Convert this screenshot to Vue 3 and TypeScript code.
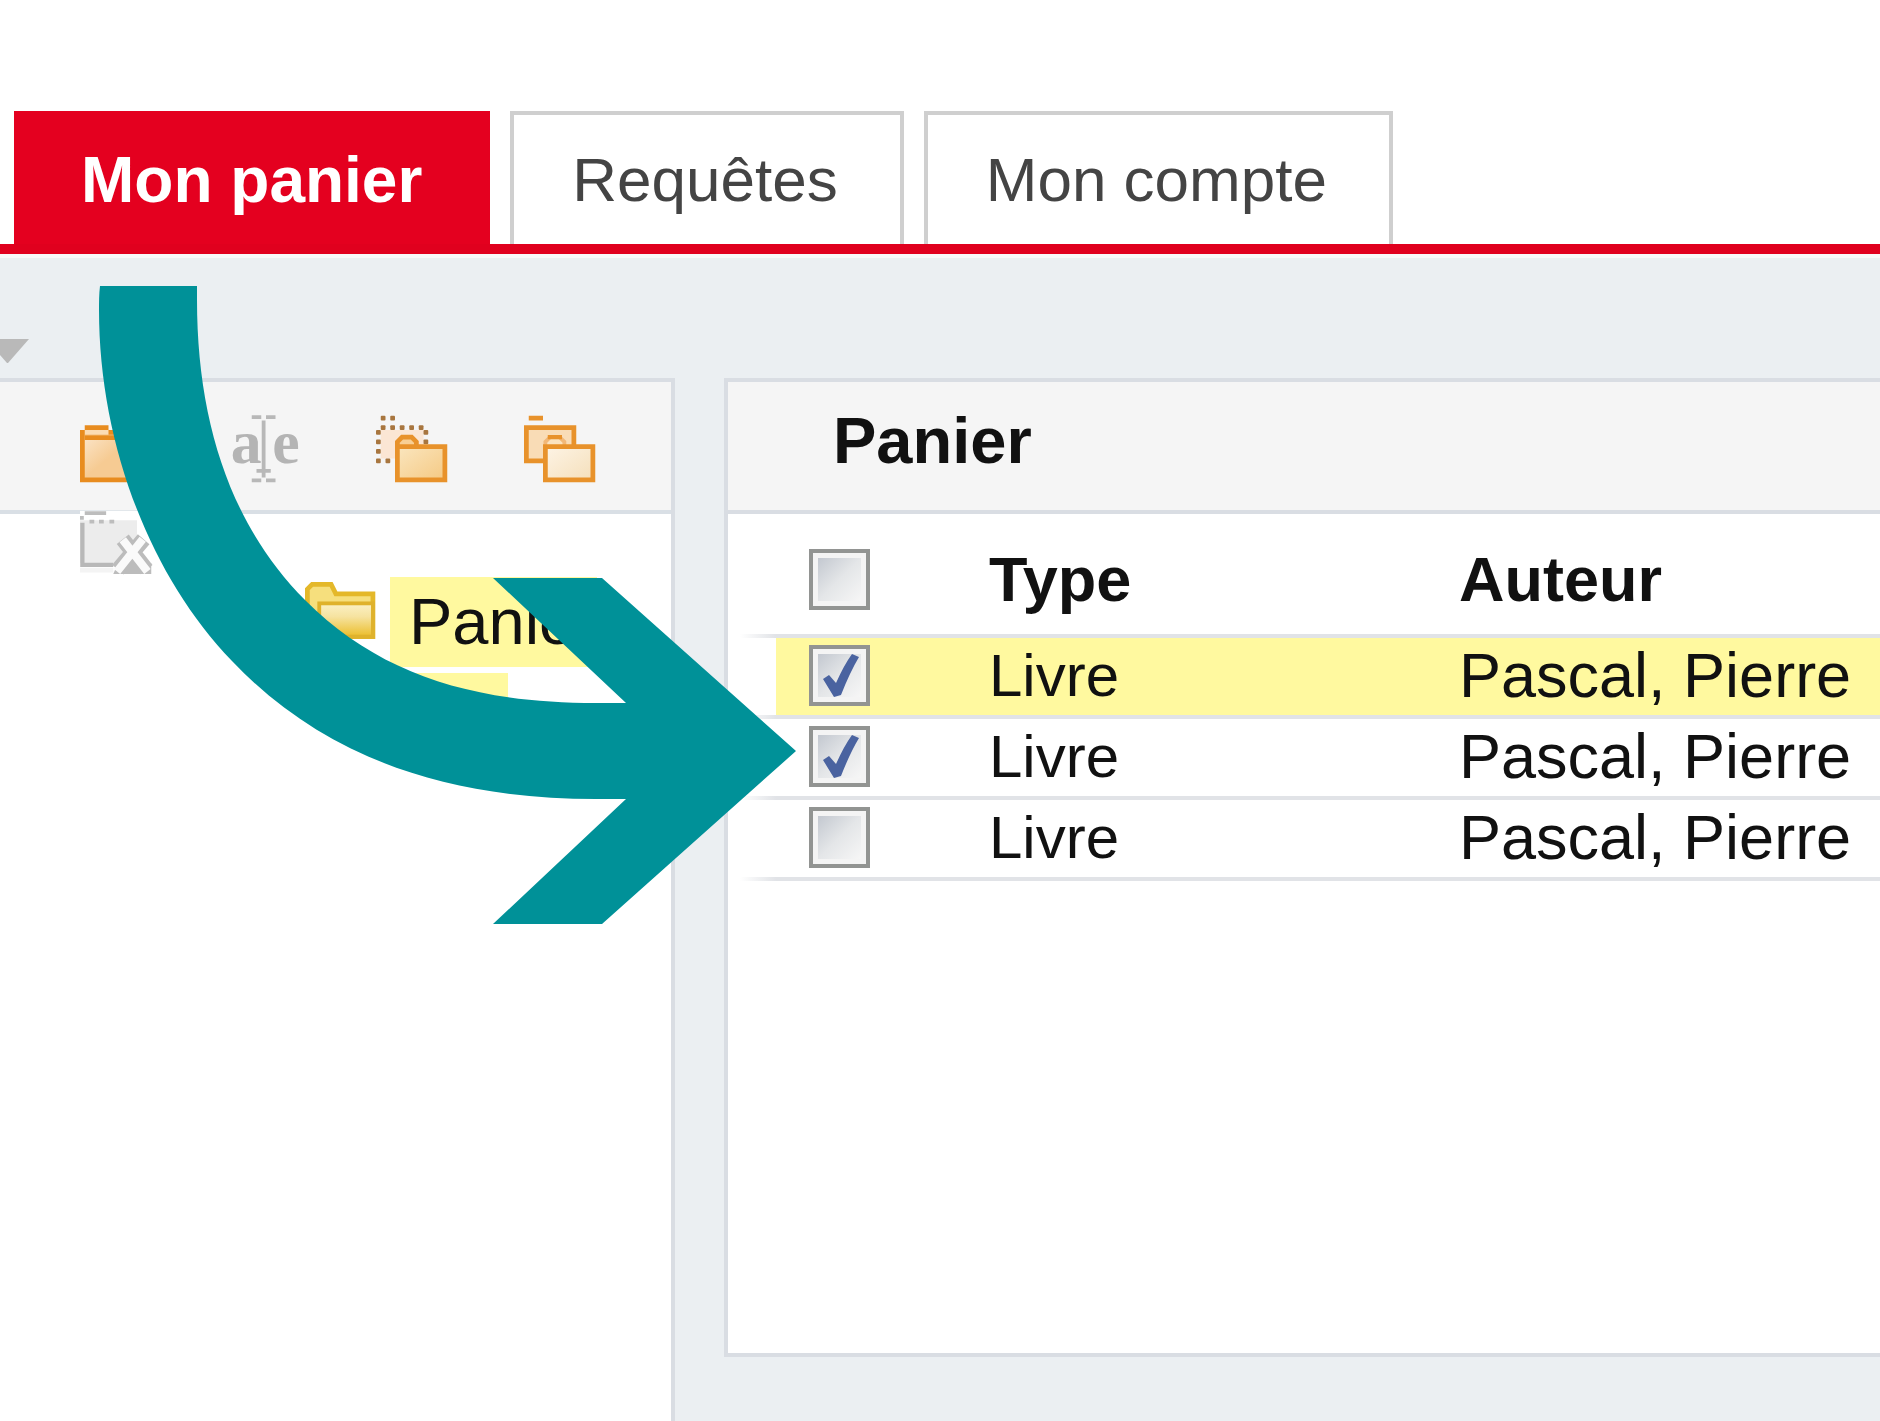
<script setup lang="ts">
import { ref } from 'vue'

interface Item {
  id: number
  type: string
  author: string
  checked: boolean
  highlighted: boolean
}

const tabs = ['Mon panier', 'Requêtes', 'Mon compte']
const activeTab = ref('Mon panier')
const allChecked = ref(false)

const items = ref<Item[]>([
  { id: 1, type: 'Livre', author: 'Pascal, Pierre', checked: true, highlighted: true },
  { id: 2, type: 'Livre', author: 'Pascal, Pierre', checked: true, highlighted: false },
  { id: 3, type: 'Livre', author: 'Pascal, Pierre', checked: false, highlighted: false },
])

// Cells of the dotted folder outline on the 16-unit icon grid
const dots: [number, number][] = [
  [1, 1], [3, 1], [1, 3], [3, 3], [5, 3], [7, 3], [9, 3],
  [0, 4], [0, 6], [0, 8], [0, 10], [2, 10], [10, 4], [10, 6],
]
</script>

<template>
  <div class="page">
    <nav class="tabs">
      <a
        v-for="tab in tabs"
        :key="tab"
        href="#"
        class="tab"
        :class="{ active: tab === activeTab }"
        @click.prevent="activeTab = tab"
      >{{ tab }}</a>
    </nav>

    <main class="workspace">
      <div class="topbar">
        <svg class="caret" viewBox="0 0 30 24" aria-hidden="true">
          <path d="M0 0H29L8 24H7L0 16Z" fill="#b9b9b9" />
        </svg>
      </div>

      <div class="columns">
        <section class="tree-panel">
          <div class="toolbar">
            <button type="button" class="tool" aria-label="Nouveau dossier">
              <svg viewBox="0 0 16 16">
                <defs>
                  <linearGradient id="folderFill" x1="0" y1="0" x2="1" y2="1">
                    <stop offset="0" stop-color="#fce8cf" />
                    <stop offset="0.5" stop-color="#f6cb93" />
                    <stop offset="1" stop-color="#f6cb93" />
                  </linearGradient>
                </defs>
                <rect x="0.5" y="4.5" width="12" height="10" fill="url(#folderFill)" stroke="#e88c1f" />
                <path d="M1 3.5H6M1 5.6H12" stroke="#e88c1f" />
                <path d="M1 4.5H6" stroke="#fbdcb4" />
              </svg>
            </button>
            <button type="button" class="tool" aria-label="Renommer">
              <svg viewBox="0 0 16 16">
                <g fill="#b4b4b4" font-family="'Liberation Serif', serif" font-weight="bold" font-size="13">
                  <text x="0.6" y="11">a</text>
                  <text x="9.3" y="11">e</text>
                </g>
                <path d="M7.5 2V14M5 1.3H7M8 1.3H10M5 14.6H7M8 14.6H10M6 12.6H9" stroke="#b8b8b8" stroke-width="0.8" />
              </svg>
            </button>
            <button type="button" class="tool" aria-label="Déplacer le dossier">
              <svg viewBox="0 0 16 16">
                <defs>
                  <linearGradient id="moveFill" x1="0" y1="0" x2="1" y2="1">
                    <stop offset="0" stop-color="#fae6bf" />
                    <stop offset="1" stop-color="#f5c983" />
                  </linearGradient>
                </defs>
                <path d="M1 4H10V8H4V10H1Z" fill="#fbe6d4" />
                <rect
                  v-for="([x, y], i) in dots"
                  :key="i"
                  :x="x"
                  :y="y"
                  width="1"
                  height="1"
                  rx="0.2"
                  fill="#a8763f"
                />
                <path d="M4.5 8V6.5L5.5 5.5H7.5L8.5 6.5V7.5" fill="#f8cf94" stroke="#e8922b" />
                <rect x="4.5" y="7.5" width="10" height="7" fill="url(#moveFill)" stroke="#e8922b" />
              </svg>
            </button>
            <button type="button" class="tool" aria-label="Copier le dossier">
              <svg viewBox="0 0 16 16">
                <defs>
                  <linearGradient id="copyFill" x1="0" y1="0" x2="1" y2="1">
                    <stop offset="0" stop-color="#fdf4e6" />
                    <stop offset="1" stop-color="#f5dfba" />
                  </linearGradient>
                </defs>
                <path d="M1 1.5H4" stroke="#e8922b" />
                <rect x="0.5" y="3.5" width="10" height="7" fill="#f9dcb6" stroke="#e8922b" />
                <path d="M4.5 8V6.5L5.5 5.5H7.5L8.5 6.5V7.5" fill="#fbe3c0" stroke="#f2b878" stroke-width="0.8" />
                <path d="M5 5.5H8" stroke="#e8922b" stroke-width="0.9" />
                <rect x="4.5" y="7.5" width="10" height="7" fill="url(#copyFill)" stroke="#e8922b" />
              </svg>
            </button>
            <button type="button" class="tool" aria-label="Supprimer le dossier">
              <svg viewBox="0 0 16 16">
                <rect x="0" y="1" width="13" height="3" fill="#fff" />
                <path d="M0 3H12V12H0Z" fill="#ececec" />
                <path d="M0 13H7V14H0Z" fill="#f4f4f4" />
                <path d="M1 1.5H5.5M0 2.5H0.8M2 3.3H3M4 3.3H5M6.2 3.3H7.2" stroke="#bdbdbd" stroke-width="0.8" />
                <path d="M0.5 3.5V12.4H7" fill="none" stroke="#b8b8b8" stroke-width="0.9" />
                <path d="M7 14.3L8 12H15V14.3Z" fill="#bcbcbc" />
                <path d="M9 7L14 13.4M13.4 7L8 13.4" stroke="#bcbcbc" stroke-width="3.2" />
                <path d="M9 7.1L14.2 13.8M13.2 7L7.8 13.8" stroke="#fafafa" stroke-width="1.7" />
              </svg>
            </button>
          </div>

          <div class="tree">
            <svg class="tree-folder" viewBox="0 0 16 12" aria-hidden="true">
              <defs>
                <linearGradient id="treeFill" x1="0" y1="0" x2="0" y2="1">
                  <stop offset="0" stop-color="#fbf1c6" />
                  <stop offset="0.4" stop-color="#f6e3a0" />
                  <stop offset="1" stop-color="#ebbd2a" />
                </linearGradient>
              </defs>
              <path d="M0.5 11.5V1.5L1.5 0.5H5.5L6.5 2.5H14.3V11.5Z" fill="#f6df7d" stroke="#e4b82a" />
              <rect x="3" y="4.5" width="11.3" height="7" fill="url(#treeFill)" stroke="#dfb22c" stroke-width="0.8" />
            </svg>
            <div class="tree-node">
              <a href="#" class="tree-label" @click.prevent>Panier</a>
              <span class="tree-strip"></span>
            </div>
          </div>
        </section>

        <section class="basket">
          <h1 class="basket-title">Panier</h1>
          <table class="items">
            <colgroup>
              <col class="col-check" />
              <col class="col-type" />
              <col />
            </colgroup>
            <thead>
              <tr>
                <th class="check-cell">
                  <span class="check">
                    <input v-model="allChecked" type="checkbox" aria-label="Tout sélectionner" />
                    <svg v-if="allChecked" viewBox="0 0 61 61" aria-hidden="true">
                      <path d="M14 34L20 30L27 38Q35 20 43 9L50 12Q41 27 32 50L25 52Z" fill="#4a63a0" />
                    </svg>
                  </span>
                </th>
                <th scope="col">Type</th>
                <th scope="col">Auteur</th>
              </tr>
            </thead>
            <tbody>
              <tr v-for="item in items" :key="item.id" :class="{ highlighted: item.highlighted }">
                <td class="check-cell">
                  <span class="check">
                    <input v-model="item.checked" type="checkbox" :aria-label="'Sélectionner ' + item.id" />
                    <svg v-if="item.checked" viewBox="0 0 61 61" aria-hidden="true">
                      <path d="M14 34L20 30L27 38Q35 20 43 9L50 12Q41 27 32 50L25 52Z" fill="#4a63a0" />
                    </svg>
                  </span>
                </td>
                <td class="type-cell">{{ item.type }}</td>
                <td>{{ item.author }}</td>
              </tr>
            </tbody>
          </table>
        </section>
      </div>
    </main>

    <svg class="arrow" viewBox="0 0 710 650" aria-hidden="true">
      <path
        transform="translate(-95 -280)"
        d="M100 286H197C197 291 197 295 197 300C197 420 230 525 305 600C380 675 474 703 596 703H626L493 578H602L796 751L602 924H493L626 799H596C444 799 322 756 232 661C148 574 99 440 99 310C99 302 99 294 100 286Z"
        fill="#009198"
      />
    </svg>
  </div>
</template>

<style>
body {
  margin: 0;
  background: #fff;
}
</style>

<style scoped>
.page {
  position: relative;
  display: flex;
  flex-direction: column;
  min-height: 100vh;
  overflow: hidden;
  background: #fff;
  font-family: 'Liberation Sans', Arial, sans-serif;
  font-size: 63px;
  color: #111;
}

.tabs {
  display: flex;
  gap: 20px;
  padding: 111px 0 0 14px;
  border-bottom: 10px solid #e0001e;
}

.tab {
  box-sizing: border-box;
  height: 133px;
  padding: 0 62px 0 58px;
  border: 4px solid #cfcfcf;
  border-bottom: 0;
  font-size: 62px;
  line-height: 130px;
  color: #444;
  text-decoration: none;
  white-space: nowrap;
}

.tab.active {
  padding: 0 64px 0 63px;
  border-color: #e4001f;
  background: #e4001f;
  font-size: 64px;
  font-weight: bold;
  color: #fff;
}

.workspace {
  flex: 1;
  display: flex;
  flex-direction: column;
  border-top: 4px solid #f8f8f9;
  background: #ebeff2;
}

.topbar {
  display: flex;
  height: 39px;
  padding-top: 81px;
}

.caret {
  width: 30px;
  height: 24px;
}

.columns {
  flex: 1;
  display: flex;
  gap: 49px;
}

.tree-panel {
  flex: 0 0 671px;
  border-top: 4px solid #d9dde3;
  border-right: 4px solid #d9dde3;
  background: #fff;
}

.toolbar {
  box-sizing: border-box;
  display: flex;
  flex-wrap: wrap;
  align-content: flex-start;
  gap: 19px 72px;
  height: 132px;
  padding: 29px 0 0 80px;
  border-bottom: 4px solid #d9dfe5;
  background: #f5f5f5;
}

.tool {
  width: 76px;
  height: 76px;
  padding: 0;
  border: 0;
  background: none;
}

.tool svg {
  display: block;
  width: 76px;
  height: 76px;
  overflow: visible;
}

.tree {
  display: flex;
  align-items: flex-start;
  gap: 9px;
  padding: 63px 0 0 305px;
}

.tree-folder {
  width: 76px;
  height: 57px;
  padding-top: 5px;
}

.tree-node {
  display: flex;
  flex-direction: column;
  align-items: flex-start;
  gap: 6px;
}

.tree-label {
  height: 90px;
  padding-left: 19px;
  background: #fff99f;
  font-size: 65px;
  line-height: 90px;
  color: #111;
  text-decoration: none;
}

.tree-strip {
  width: 118px;
  height: 90px;
  background: #fff99f;
}

.basket {
  flex: 1;
  margin-bottom: 64px;
  border: 4px solid #d9dde3;
  border-right: 0;
  background: #fff;
}

.basket-title {
  height: 128px;
  margin: 0;
  padding-left: 105px;
  border-bottom: 4px solid #d9dde3;
  background: #f5f5f5;
  font-size: 65px;
  line-height: 118px;
}

.items {
  width: calc(100% - 12px);
  margin-left: 12px;
  border-collapse: collapse;
  table-layout: fixed;
}

.col-check {
  width: 249px;
}

.col-type {
  width: 470px;
}

.items th,
.items td {
  box-sizing: border-box;
  height: 81px;
  padding: 0 0 6px;
  background: linear-gradient(#e1e3e7, #e1e3e7) bottom / 100% 4px no-repeat;
  line-height: 75px;
  text-align: left;
  vertical-align: middle;
  white-space: nowrap;
}

.items th {
  height: 124px;
  padding: 6px 0 0;
}

.items .type-cell {
  font-size: 60px;
}

.items .check-cell {
  padding-left: 69px;
  background-image: linear-gradient(to right, #fff, #e1e3e7 36px);
  line-height: 0;
}

.items .highlighted td {
  background-color: #fff99f;
}

.items .highlighted .check-cell {
  background:
    linear-gradient(to right, #fff, #e1e3e7 36px) bottom / 100% 4px no-repeat,
    linear-gradient(to right, #fff 36px, #fff99f 36px);
}

.check {
  display: inline-grid;
}

.check > * {
  grid-area: 1 / 1;
  width: 61px;
  height: 61px;
}

.check svg {
  pointer-events: none;
}

.check input {
  appearance: none;
  box-sizing: border-box;
  margin: 0;
  padding: 5px;
  border: 4px solid #929492;
  background:
    linear-gradient(135deg, #c3c8d0, #e4e6e8 50%, #f6f6f6) content-box,
    #f4f4f4;
}

.arrow {
  position: absolute;
  top: 280px;
  left: 95px;
  width: 710px;
  height: 650px;
  pointer-events: none;
}
</style>
